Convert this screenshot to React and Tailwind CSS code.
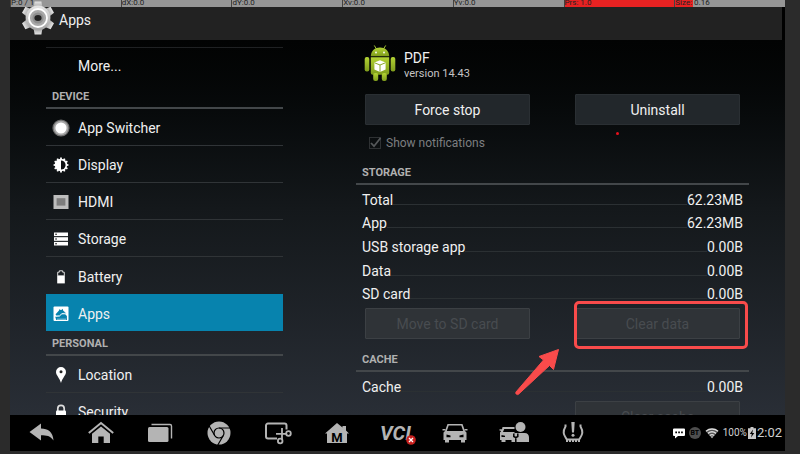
import clsx from "clsx";

const pointerCells = ["P:0 / 1", "dX:0.0", "dY:0.0", "Xv:0.0", "Yv:0.0", "Prs: 1.0", "Size: 0.16"];

const GearIcon = () => (
  <svg viewBox="0 0 32 34" className="h-[34px] w-8" aria-hidden="true">
    <defs>
      <linearGradient id="gear" x1="0" y1="0" x2="0" y2="1">
        <stop offset="0" stopColor="#e6e6e6" />
        <stop offset="1" stopColor="#a4a4a4" />
      </linearGradient>
    </defs>
    <g fill="url(#gear)">
      {[0, 60, 120, 180, 240, 300].map((deg) => (
        <path key={deg} d="M12.6 0.5h6.8l1 6h-8.8z" transform={`rotate(${deg} 16 17)`} />
      ))}
      <circle cx="16" cy="17" r="12.4" />
    </g>
    <circle cx="16" cy="17" r="9" fill="#a9a9a9" stroke="#fff" strokeWidth="1.8" />
    <circle cx="16" cy="17" r="5.6" fill="#8f8f8f" />
    <ellipse cx="16" cy="17" rx="3.6" ry="3" fill="#222" />
  </svg>
);

const SwitcherIcon = () => (
  <svg viewBox="0 0 18 18" className="size-[18px]" aria-hidden="true">
    <circle cx="9" cy="9" r="8.6" fill="#6e6e6e" />
    <circle cx="9" cy="9" r="7.3" fill="#a8a8a8" />
    <circle cx="9" cy="9" r="5.6" fill="#fff" />
  </svg>
);

const DisplayIcon = () => (
  <svg viewBox="0 0 16 16" className="size-4" aria-hidden="true">
    {[0, 30, 60, 90, 120, 150].map((deg) => (
      <path key={deg} d="M8 .6V15.4" stroke="#fff" strokeWidth="1.8" transform={`rotate(${deg} 8 8)`} />
    ))}
    <circle cx="8" cy="8" r="6.2" fill="#fff" />
    <path d="M8 3.4a4.6 4.6 0 0 1 0 9.2z" fill="#0e1012" />
  </svg>
);

const HdmiIcon = () => (
  <svg viewBox="0 0 16 16" className="size-4" aria-hidden="true">
    <rect x="0.5" y="1" width="15" height="14" fill="#bdbdbd" />
    <rect x="3.6" y="4.2" width="8.8" height="7.4" fill="#7d7d7d" />
  </svg>
);

const StorageIcon = () => (
  <svg viewBox="0 0 16 16" className="size-4" aria-hidden="true">
    {[1.5, 6.2, 10.9].map((y) => (
      <g key={y}>
        <rect x="1" y={y} width="14" height="3.6" fill="#fff" />
        <rect x="2.3" y={y + 1.1} width="1.5" height="1.4" fill="#333" />
      </g>
    ))}
  </svg>
);

const BatteryIcon = () => (
  <svg viewBox="0 0 16 16" className="size-4" aria-hidden="true">
    <path d="M4.7 6.6V3.2h1.6V1.8h3.4v1.4h1.6v3.4" fill="none" stroke="#ddd" strokeWidth="1" />
    <rect x="4.2" y="6.4" width="7.6" height="8" fill="#fff" />
  </svg>
);

const AppsIcon = () => (
  <svg viewBox="0 0 16 16" className="size-4" aria-hidden="true">
    <rect x="0.5" y="0.5" width="15" height="14.6" rx="1" fill="#fff" />
    <path d="M2.6 8.2 6 4.4l.6-1.4.9 1 1.3-.2 1-1 .3 1.7 3.3 2.9-1.2.5-3.4.6-2.5 2-2.8-.2z" fill="#0783ae" />
    <path d="M2.2 10.8h4l2.6-2.2 3.4-.3 1.7 1.6v4H3.3z" fill="#0783ae" />
    <path d="M3 10 6.4 9.8 9 7.6l4-.4 1 1.4" fill="none" stroke="#fff" strokeWidth=".9" />
    <path d="M4 13.2h9" stroke="#fff" strokeWidth=".6" />
  </svg>
);

const LocationIcon = () => (
  <svg viewBox="0 0 16 16" className="size-4" aria-hidden="true">
    <path d="M8 0a5 5 0 0 1 5 5c0 3.4-3.6 5.8-5 11C6.6 10.8 3 8.4 3 5a5 5 0 0 1 5-5z" fill="#fff" />
    <circle cx="8" cy="4.8" r="1.5" fill="#222" />
  </svg>
);

const LockIcon = () => (
  <svg viewBox="0 0 16 16" className="size-4" aria-hidden="true">
    <path d="M4.8 7V4.6a3.2 3.2 0 0 1 6.4 0V7" fill="none" stroke="#ddd" strokeWidth="1.7" />
    <rect x="3" y="6.5" width="10" height="8.5" rx="1" fill="#fff" />
  </svg>
);

const AndroidIcon = () => (
  <svg viewBox="0 0 32 36" className="h-9 w-8 shrink-0" aria-hidden="true">
    <defs>
      <linearGradient id="droid" x1="0" y1="0" x2="0" y2="1">
        <stop offset="0" stopColor="#b3d334" />
        <stop offset="1" stopColor="#7f9c1c" />
      </linearGradient>
    </defs>
    <path d="M10.5 .8l2.3 3.7M21.500 .8l-2.3 3.7" stroke="#a4c639" strokeWidth="1" strokeLinecap="round" />
    <g fill="url(#droid)">
      <path d="M6.8 11.2C7 6 11 2.6 16 2.6s9 3.4 9.2 8.6z" />
      <path d="M6.8 12.200h18.4v15.6a2 2 0 0 1-2 2H8.8a2 2 0 0 1-2-2z" />
      <rect x="0.7" y="12" width="4.6" height="14.5" rx="2" />
      <rect x="26.7" y="12" width="4.6" height="14.5" rx="2" />
      <rect x="9.2" y="28" width="5" height="8" rx="2" />
      <rect x="17.8" y="28" width="5" height="8" rx="2" />
    </g>
    <circle cx="12" cy="7.5" r="0.9" fill="#fff" />
    <circle cx="20" cy="7.5" r="0.9" fill="#fff" />
    <path d="M16 15.3l5.6 2.3v6.8L16 27l-5.6-2.6v-6.8z" fill="#fff" />
    <path d="M10.6 17.8 16 20l5.4-2.2M16 20v6.8" fill="none" stroke="#8aa82a" strokeWidth="1" />
  </svg>
);

const navItems = [
  {
    name: "Back",
    icon: <path d="M1.5 13 13 4.5v5c7 0 12 3.5 12.5 12-3-4.8-7-5.3-12.5-5.3v5.3z" />,
  },
  {
    name: "Home",
    icon: (
      <>
        <path d="M1.8 14 14 4l12.2 10" fill="none" stroke="#b4b4b4" strokeWidth="2" />
        <path d="M5 14.8 14 7.5l9 7.3V24h-6.3v-6.5h-5.4V24H5z" />
      </>
    ),
  },
  {
    name: "Recent apps",
    icon: (
      <>
        <rect x="2" y="8" width="20.5" height="15" rx="1.5" />
        <path d="M5.5 5.5H24A1.5 1.5 0 0 1 25.500 7v12.5" fill="none" stroke="#b4b4b4" strokeWidth="1.4" />
      </>
    ),
  },
  {
    name: "Chrome",
    icon: (
      <>
        <circle cx="14" cy="14" r="11.5" />
        <g fill="none" stroke="#000" strokeWidth="1.2">
          <circle cx="14" cy="14" r="5" />
          <path d="M14 9h11M9.7 16.5 4.2 7M18.3 16.5 12.8 26" />
        </g>
        <circle cx="14" cy="14" r="3.9" />
      </>
    ),
  },
  {
    name: "Screenshot",
    icon: (
      <>
        <path d="M13 19.5H4a2 2 0 0 1-2-2V6.500a2 2 0 0 1 2-2h16.500a2 2 0 0 1 2 2v4" fill="none" stroke="#b4b4b4" strokeWidth="2" />
        <g fill="none" stroke="#b4b4b4" strokeWidth="1.8">
          <path d="M18 9v11.500M12 14.8h10.500" />
          <circle cx="24.5" cy="14.5" r="2.3" />
          <circle cx="16.200" cy="22" r="2.3" />
        </g>
      </>
    ),
  },
  {
    name: "Main menu",
    icon: (
      <>
        <path d="M14 4l5.500 4.500V7H23v4.500l3 3h-2V24H4v-9.500H2z" />
        <text x="14" y="22.500" textAnchor="middle" fill="#000" className="font-[Roboto] text-[13px] font-bold">
          M
        </text>
      </>
    ),
  },
  { name: "VCI" },
  {
    name: "Vehicle",
    icon: (
      <>
        <path d="M6.500 5h15L24 12l1.500 1.500V21H24v2.500h-4V21H8v2.500H4V21H2.500v-7.500L4 12z" />
        <path d="M7.700 6.500h12.600l1.900 5.500H5.800z" fill="#000" />
        <path d="M1.500 10h3v1.500h-3zM23.500 10h3v1.500h-3z" />
        <path d="M5.500 15.500l4 1v1.800h-4zM22.500 15.500l-4 1v1.800h4z" fill="#000" />
      </>
    ),
  },
  {
    name: "Technician",
    icon: (
      <>
        <path d="M2.500 8h12v2H4.200L3 13h11.500v8H5.500v2H1.500v-2H0v-7.500L1.200 12l-1.700-.5v-1.300H2z" />
        <path d="M1.500 16l3.500.7v1.300H1.500z" fill="#000" />
        <circle cx="20.500" cy="8" r="5" />
        <path d="M11.500 23v-5.500c0-2.500 2.500-3.500 5-3.500h8c3 0 4.500 2 4.500 4.500V23z" />
        <path d="M13.800 14.500v3l2 1.200 2-1.200v-3M15.800 18v5.500" fill="none" stroke="#000" strokeWidth="1.500" />
      </>
    ),
  },
  {
    name: "Tire pressure",
    icon: (
      <>
        <path d="M6.500 5.500v2C5 10 4.500 11.500 4.700 14c.3 2.500 1.600 4 3.100 6.500h12.400c1.500-2.500 2.800-4 3.100-6.500.2-2.500-.3-4-1.800-6.500v-2" fill="none" stroke="#b4b4b4" strokeWidth="2" />
        <path d="M8 20.500v2.500M11 20.500v2.500M14 20.500v2.500M17 20.500v2.500M20 20.500v2.500" stroke="#b4b4b4" strokeWidth="2" />
        <path d="M12.300 3h3.400l-.7 10.500h-2z" />
        <circle cx="14" cy="16.200" r="1.500" />
      </>
    ),
  },
];

const VciIcon = () => (
  <span className="relative text-xl leading-7 font-bold text-[#b4b4b4] italic">
    VCI
    <svg viewBox="0 0 10 10" className="absolute right-[-5px] bottom-0.5 size-2.5" aria-hidden="true">
      <circle cx="5" cy="5" r="4.8" fill="#c8201e" />
      <path d="M3 3l4 4M7 3l-4 4" stroke="#fff" strokeWidth="1.3" />
    </svg>
  </span>
);

const SectionTitle = ({ children, className }) => (
  <h2
    className={clsx(
      "flex h-[25px] items-center border-b-2 border-[#43474a] px-1.5 pt-[3px] text-[11px] font-bold text-[#b0b0b0]",
      className
    )}
  >
    {children}
  </h2>
);

const SideItem = ({ icon, label, active, last }) => (
  <a
    href="#"
    className={clsx(
      "flex h-[37px] items-center gap-2 px-1.5 pt-0.5",
      active ? "bg-[#0783ae]" : !last && "border-b border-[#303437]"
    )}
  >
    <span className="flex w-[18px] justify-center">{icon}</span>
    {label}
  </a>
);

const ActionButton = ({ children, disabled }) => (
  <button
    type="button"
    disabled={disabled}
    className="h-[31px] w-full rounded-[1px] border border-[#2a2f33] bg-[#22272b] text-sm text-[#f0f0f0] disabled:border-[#3c4044] disabled:bg-[#2f3337] disabled:text-[#484c50]"
  >
    {children}
  </button>
);

const SizeRow = ({ label, value }) => (
  <div className="flex flex-1 items-center">
    <div className="flex flex-1 items-baseline">
      <dt>{label}</dt>
      <span className="flex-1 border-b border-[#2b3033]" />
      <dd>{value}</dd>
    </div>
  </div>
);

const PointerBar = () => (
  <div className="grid h-[7px] shrink-0 grid-cols-7 bg-[#969696] text-[8px] leading-[6px] text-[#222]">
    {pointerCells.map((cell, i) => (
      <span
        key={cell}
        className={clsx(
          "h-[7px] border-l border-[#444]",
          i === 5 && "bg-[#e82222]",
          i === 6 && "bg-linear-to-r from-[#e82222] from-16% to-transparent to-16%"
        )}
      >
        {cell}
      </span>
    ))}
  </div>
);

const Sidebar = () => (
  <nav className="w-[237px] shrink-0 pt-[7px] text-[#f0f0f0]">
    <a href="#" className="flex h-[37px] items-center border-t border-[#1f2123] pb-px pl-8">
      More...
    </a>
    <SectionTitle>DEVICE</SectionTitle>
    <SideItem icon={<SwitcherIcon />} label="App Switcher" />
    <SideItem icon={<DisplayIcon />} label="Display" />
    <SideItem icon={<HdmiIcon />} label="HDMI" />
    <SideItem icon={<StorageIcon />} label="Storage" />
    <SideItem icon={<BatteryIcon />} label="Battery" last />
    <SideItem icon={<AppsIcon />} label="Apps" active />
    <SectionTitle>PERSONAL</SectionTitle>
    <SideItem icon={<LocationIcon />} label="Location" />
    <SideItem icon={<LockIcon />} label="Security" />
  </nav>
);

const AppDetails = () => (
  <main className="min-w-0 flex-1 pt-[5px] text-[#f0f0f0]">
    <div className="flex items-center gap-2 px-2">
      <AndroidIcon />
      <div className="pt-1">
        <h1 className="text-sm leading-[18px]">PDF</h1>
        <p className="text-[11px] leading-[14px] text-[#c4c4c4]">version 14.43</p>
      </div>
    </div>

    <div className="mt-[13px] grid grid-cols-2 gap-[45px] px-[9px]">
      <ActionButton>Force stop</ActionButton>
      <div className="relative">
        <ActionButton>Uninstall</ActionButton>
        {/* touch point */}
        <span className="absolute -bottom-2.5 left-[41px] size-[3px] rounded-full bg-[#e8101c]" />
      </div>
    </div>

    <label className="mt-2 flex h-5 items-center gap-1 pl-3 text-xs text-[#7c7e80]">
      <span className="grid size-3.5 place-items-center">
        <input
          type="checkbox"
          defaultChecked
          disabled
          className="col-start-1 row-start-1 size-3 appearance-none border border-[#2e3133]"
        />
        <svg viewBox="0 0 14 14" className="col-start-1 row-start-1 size-3.5" aria-hidden="true">
          <path d="M3 7l3 3.2L12.5 2" fill="none" stroke="#55585a" strokeWidth="1.8" />
        </svg>
      </span>
      Show notifications
    </label>

    <SectionTitle className="mt-[7px]">STORAGE</SectionTitle>
    <dl className="mt-[3px] flex h-[118px] flex-col px-1.5">
      <SizeRow label="Total" value="62.23MB" />
      <SizeRow label="App" value="62.23MB" />
      <SizeRow label="USB storage app" value="0.00B" />
      <SizeRow label="Data" value="0.00B" />
      <SizeRow label="SD card" value="0.00B" />
    </dl>

    <div className="mt-0.5 grid grid-cols-2 gap-[45px] px-[9px]">
      <ActionButton disabled>Move to SD card</ActionButton>
      <div className="relative">
        <ActionButton disabled>Clear data</ActionButton>
        <span className="pointer-events-none absolute -top-[7px] -right-2 -bottom-2.5 -left-px rounded-[5px] border-3 border-[#f94b4b]" />
        <svg
          viewBox="0 0 46 48"
          className="pointer-events-none absolute top-10 -left-[61px] h-12 w-[46px]"
          aria-hidden="true"
        >
          <path
            d="M44.5 1.5 25 8.500l4.500 3.500L2 44c-1 1.5 1 3.5 2.5 2.2L35.500 17.500l4 4z"
            fill="#f94b4b"
            stroke="#f94b4b"
            strokeLinejoin="round"
          />
        </svg>
      </div>
    </div>

    <SectionTitle className="mt-2">CACHE</SectionTitle>
    <dl className="mt-[3px] flex h-6 flex-col px-1.5">
      <SizeRow label="Cache" value="0.00B" />
    </dl>
    <div className="mt-0.5 grid grid-cols-2 gap-[45px] px-[9px]">
      <div className="col-start-2">
        <ActionButton disabled>Clear cache</ActionButton>
      </div>
    </div>
  </main>
);

const StatusArea = () => (
  <div className="flex items-center gap-1 text-[#d0d0d0]">
    <svg viewBox="0 0 12 12" className="size-3" aria-hidden="true">
      <path d="M1 1.500h10a1 1 0 0 1 1 1V8a1 1 0 0 1-1 1H5l-3 2.500V9H1a1 1 0 0 1-1-1V2.500a1 1 0 0 1 1-1z" fill="#fff" />
      <path d="M2.300 4.500h1.700v1.700H2.300zM5.200 4.500h1.700v1.700H5.200zM8.100 4.500h1.700v1.700H8.100z" fill="#000" />
    </svg>
    <span className="flex size-3 items-center justify-center rounded-full bg-[#4e4e4e] text-[7px] font-bold text-black">
      BT
    </span>
    <svg viewBox="0 0 14 12" className="h-3 w-3.5" aria-hidden="true">
      <path d="M.5 4a10 10 0 0 1 13 0L7 11.500z" fill="#555" />
      <g fill="none" stroke="#ddd" strokeWidth="1.400">
        <path d="M1 4.200a9.500 9.500 0 0 1 12 0M3 6.400a6.500 6.500 0 0 1 8 0M4.800 8.500a3.500 3.500 0 0 1 4.400 0" />
      </g>
      <path d="M5.800 9.500h2.400L7 11z" fill="#ddd" />
    </svg>
    <div className="flex items-center gap-px">
      <span className="text-[10px]">100%</span>
      <svg viewBox="0 0 8 12" className="h-3 w-2" aria-hidden="true">
        <path d="M2.500 0h3v1.300H8V12H0V1.300h2.500z" fill="#c8c8c8" />
        <path d="M5 2.500 1.800 7h2L3 10.500 6.300 6h-2z" fill="#000" />
      </svg>
      <span className="text-[13px] leading-4">2:02</span>
    </div>
  </div>
);

const BottomBar = () => (
  <footer className="flex h-9 shrink-0 items-center justify-between bg-black pr-[3px] pl-0.5">
    <div className="flex">
      {navItems.map((item) => (
        <button key={item.name} type="button" aria-label={item.name} className="flex h-7 w-[59px] items-center justify-center">
          {item.icon ? (
            <svg viewBox="0 0 28 28" fill="#b4b4b4" className="size-7 overflow-visible" aria-hidden="true">
              {item.icon}
            </svg>
          ) : (
            <VciIcon />
          )}
        </button>
      ))}
    </div>
    <StatusArea />
  </footer>
);

const App = () => {
  return (
    <div className="h-screen overflow-hidden bg-[#2b2b2b] pr-[15px] pb-[3px] pl-2.5 font-[Roboto,sans-serif] text-sm">
      <div className="flex h-full flex-col bg-black">
        <PointerBar />
        <header className="mr-[3px] flex h-[33px] shrink-0 items-center gap-[5px] bg-[#222] pl-3 text-[#f0f0f0]">
          <span className="relative -mt-3">
            <GearIcon />
          </span>
          <span className="-mt-2">Apps</span>
        </header>
        <div className="flex min-h-0 flex-1 gap-[73px] overflow-hidden bg-linear-to-b from-[#020303] via-[#14181b] via-45% to-[#292e36] px-9">
          <Sidebar />
          <AppDetails />
        </div>
        <BottomBar />
      </div>
    </div>
  );
};

export default App;
